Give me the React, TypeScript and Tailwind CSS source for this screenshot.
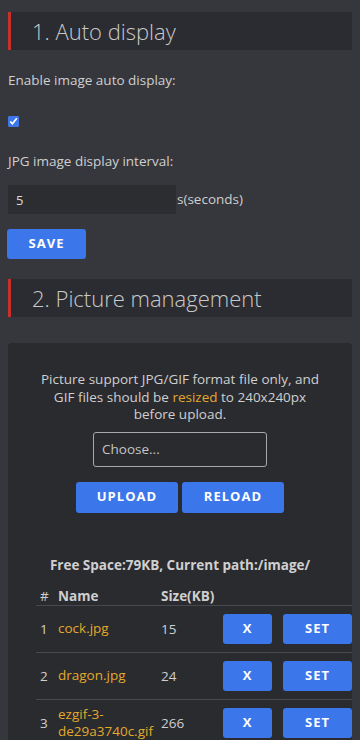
import React from 'react';

const font = { fontFamily: '"Open Sans", "Noto Sans", sans-serif' };

const files = [
  { id: 1, name: 'cock.jpg', size: 15 },
  { id: 2, name: 'dragon.jpg', size: 24 },
  { id: 3, name: 'ezgif-3-de29a3740c.gif', size: 266 },
];

const SectionTitle = ({ children }: { children: React.ReactNode }) => (
  <div className="flex h-[38px] items-center border-l-[3px] border-[#c8302c] bg-[#2b2c31] pl-[21px]">
    <h2 className="text-[22px] font-light leading-none text-[#c9c9c9]">{children}</h2>
  </div>
);

const BlueButton = ({ children, className }: { children: React.ReactNode; className?: string }) => (
  <button
    className={
      'flex items-center justify-center rounded-[3px] bg-[#3b76eb] text-[13px] font-bold tracking-[0.08em] text-white ' +
      (className ?? '')
    }
  >
    {children}
  </button>
);

export default function App() {
  return (
    <div className="min-h-[740px] w-[360px] overflow-hidden bg-[#35373d] px-2 pt-3 text-[13.5px] text-[#cfcfcf]" style={font}>
      <SectionTitle>1. Auto display</SectionTitle>

      <p className="mt-[21px] leading-[18px]">Enable image auto display:</p>
      <div className="mt-[23px] flex h-[18px] items-center">
        <input type="checkbox" defaultChecked className="h-[11px] w-[11px] accent-[#3b76eb]" />
      </div>
      <p className="mt-[22px] leading-[18px]">JPG image display interval:</p>
      <div className="mt-[15px] flex items-center">
        <input
          defaultValue="5"
          className="h-[29px] w-[168px] bg-[#2c2d31] px-2 text-[13px] text-[#dcdcdc] outline-none"
        />
        <span className="ml-px">s(seconds)</span>
      </div>
      <BlueButton className="mt-[15px] -ml-px h-[30px] w-[79px]">SAVE</BlueButton>

      <div className="mt-[20px]">
        <SectionTitle>2. Picture management</SectionTitle>
      </div>

      <div className="mt-[26px] rounded-[4px] bg-[#2a2b2f] pb-6 pt-[28px]">
        <p className="px-4 text-center leading-[17.5px]">
          Picture support JPG/GIF format file only, and
          <br />
          GIF files should be <span className="text-[#e2a92c]">resized</span> to 240x240px
          <br />
          before upload.
        </p>
        <div className="mt-[8px] flex justify-center">
          <div className="flex h-[35px] w-[174px] items-center rounded-[3px] border border-[#a8a8a8] px-2 text-[#c4c4c4]">
            Choose...
          </div>
        </div>
        <div className="mt-[15px] flex justify-center gap-1">
          <BlueButton className="h-[31px] w-[102px]">UPLOAD</BlueButton>
          <BlueButton className="h-[31px] w-[102px]">RELOAD</BlueButton>
        </div>

        <p className="mt-[42px] text-center font-bold text-[#d0d0d0]">Free Space:79KB, Current path:/image/</p>

        <table className="ml-[28px] mt-[13px] w-[316px] border-collapse text-left">
          <thead>
            <tr className="border-b border-[#48494e] font-bold leading-[16px]">
              <th className="w-[20px] pb-[1px] pl-1 font-normal">#</th>
              <th className="w-[105px] pb-[1px] pl-[2px]">Name</th>
              <th className="w-[59px] pb-[1px]">Size(KB)</th>
              <th className="pb-[1px]"></th>
              <th className="pb-[1px]"></th>
            </tr>
          </thead>
          <tbody>
            {files.map(f => (
              <tr key={f.id} className="h-[47px] border-b border-[#48494e]">
                <td className="pl-1">{f.id}</td>
                <td className="break-all pl-[2px] leading-[17px] text-[#e2a92c]">
                  {f.name === 'ezgif-3-de29a3740c.gif' ? (
                    <>
                      ezgif-3-
                      <br />
                      de29a3740c.gif
                    </>
                  ) : (
                    f.name
                  )}
                </td>
                <td>{f.size}</td>
                <td>
                  <BlueButton className="ml-[3px] h-[30px] w-[49px]">X</BlueButton>
                </td>
                <td>
                  <BlueButton className="ml-auto h-[30px] w-[69px]">SET</BlueButton>
                </td>
              </tr>
            ))}
          </tbody>
        </table>
      </div>
    </div>
  );
}
